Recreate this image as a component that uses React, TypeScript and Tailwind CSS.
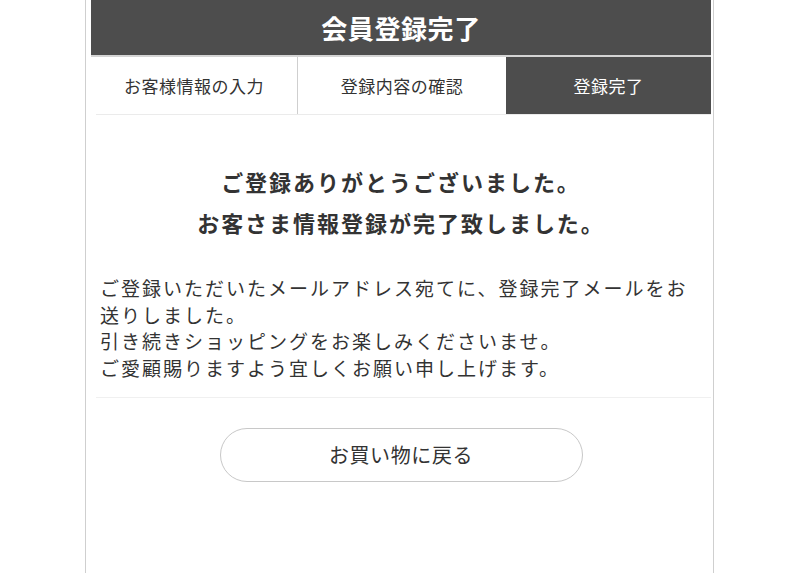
const FONT = { fontFamily: '"Noto Sans CJK JP", "Noto Sans", sans-serif' };

const STEPS = ["お客様情報の入力", "登録内容の確認", "登録完了"];

export default function App() {
  return (
    <div className="min-h-[573px] bg-white text-[#333]" style={FONT}>
      <div className="ml-[85px] w-[629px] min-h-[573px] border-x border-[#cfcfcf] pl-[5px] pr-[2px]">
        <h1 className="flex h-[55px] items-center justify-center bg-[#4d4d4d] text-[26px] font-bold tracking-[0.6px] text-white">
          会員登録完了
        </h1>
        <div className="h-[2px] bg-[#d4d4d4]" />
        <ul className="grid h-[57px] grid-cols-[207px_208px_205px]">
          {STEPS.map((s, i) => (
            <li
              key={s}
              className={`flex items-center justify-center text-[17px] tracking-[0.5px] ${
                i === 2
                  ? "bg-[#4d4d4d] text-white"
                  : i === 0
                    ? "border-r border-[#cfcfcf]"
                    : ""
              }`}
            >
              {s}
            </li>
          ))}
        </ul>
        <div className="ml-[5px] h-px bg-[#ebebeb]" />

        <div className="pt-[46px] text-center text-[22px] font-bold leading-[41px] tracking-[0.09em]">
          <p>ご登録ありがとうございました。</p>
          <p>お客さま情報登録が完了致しました。</p>
        </div>

        <p className="mt-[32px] w-[610px] pl-[9px] text-[19px] leading-[26.7px] tracking-[2px]">
          ご登録いただいたメールアドレス宛てに、登録完了メールをお送りしました。
          <br />
          引き続きショッピングをお楽しみくださいませ。
          <br />
          ご愛顧賜りますよう宜しくお願い申し上げます。
        </p>
        <div className="ml-[5px] mt-[15px] h-px bg-[#f0f0f0]" />

        <div className="flex justify-center pt-[30px]">
          <button className="flex h-[54px] w-[363px] items-center justify-center rounded-full border border-[#c8c8c8] bg-white text-[20px] tracking-[0.6px] text-[#333]">
            お買い物に戻る
          </button>
        </div>
      </div>
    </div>
  );
}
